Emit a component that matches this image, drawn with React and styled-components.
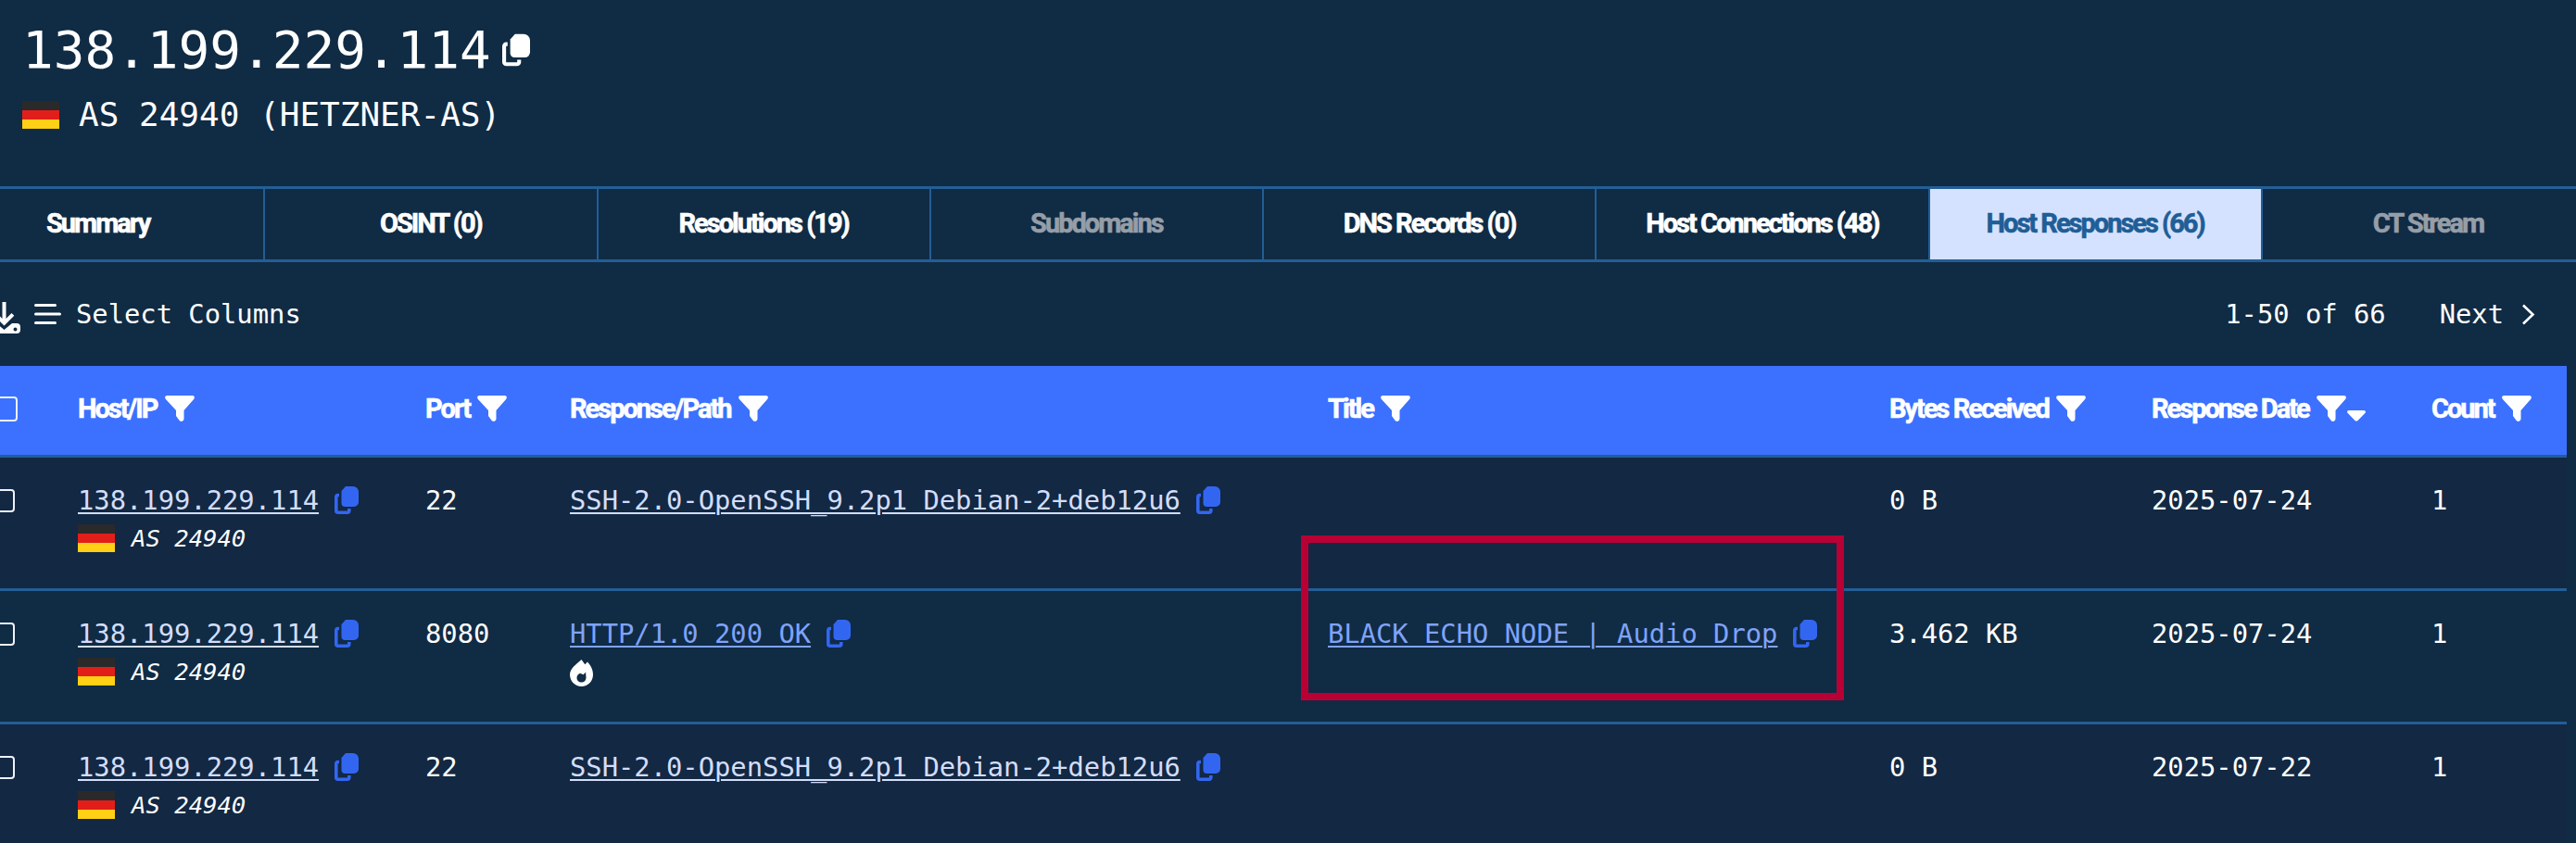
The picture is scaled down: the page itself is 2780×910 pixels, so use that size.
import React from 'react';
import styled, { createGlobalStyle } from 'styled-components';

const COLUMNS = '158px 375px 156px 818px 606px 283px 302px 146px';
const BORDER = '#235e96';
const MONO = '"DejaVu Sans Mono", monospace';
const HEAD = 'Roboto, "Open Sans", sans-serif';

const Global = createGlobalStyle`
    html, body {
        margin: 0;
        padding: 0;
        background: #102b44;
    }
`;

const Page = styled.div`
    position: relative;
    width: 2780px;
    height: 910px;
    overflow: hidden;
    background: #102b44;
    color: #fff;
    font-family: ${MONO};
`;

const Header = styled.header`
    height: 201px;
    padding: 18px 0 0 24px;
    box-sizing: border-box;
`;

const HostTitle = styled.h1`
    display: flex;
    align-items: center;
    margin: 0;
    height: 72px;
    font-size: 56px;
    font-weight: 400;
    line-height: 72px;
    color: #fff;
`;

const AsLine = styled.div`
    display: flex;
    align-items: center;
    gap: 21px;
    margin-top: 11px;
    font-size: 36px;
    line-height: 46px;
`;

const Flag = styled.span`
    display: block;
    flex: none;
    width: 40px;
    height: 30px;
    background: linear-gradient(#2a2a2a 0 33.3%, #e21e1a 33.3% 66.6%, #ffd015 66.6%);
`;

const Tabs = styled.nav`
    display: grid;
    grid-template-columns: repeat(8, 359.25px);
    height: 82px;
    margin-left: -75px;
    box-sizing: border-box;
    border-top: 3px solid ${BORDER};
    border-bottom: 3px solid ${BORDER};
`;

const Tab = styled.div`
    display: flex;
    align-items: center;
    justify-content: center;
    padding-bottom: 3px;
    border-left: 2px solid ${BORDER};
    font-family: ${HEAD};
    font-size: 29px;
    font-weight: 700;
    letter-spacing: -2px;
    -webkit-text-stroke: 0.6px currentColor;
    background: ${p => (p.$active ? '#d5e2ff' : 'transparent')};
    color: ${p => (p.$active ? '#1f5e96' : p.$muted ? '#959ea8' : '#fff')};
`;

const Toolbar = styled.div`
    display: flex;
    align-items: center;
    justify-content: space-between;
    height: 112px;
    margin-left: -14px;
    padding-right: 44px;
    font-size: 28.8px;
`;

const ToolGroup = styled.div`
    display: flex;
    align-items: center;
`;

const DownloadIcon = styled.svg`
    width: 36px;
    height: 34px;
    margin: 8px 15px 0 0;
    fill: #fff;
`;

const MenuIcon = styled.svg`
    width: 29px;
    height: 22px;
    margin-right: 16px;
    fill: #fff;
`;

const Next = styled.span`
    margin-left: 58px;
`;

const ChevronIcon = styled.svg`
    width: 15px;
    height: 23px;
    margin-left: 19px;
    fill: none;
    stroke: #fff;
    stroke-width: 2.6;
`;

const Table = styled.div`
    margin-left: -74px;
    width: 2844px;
`;

const HeadRow = styled.div`
    display: grid;
    grid-template-columns: ${COLUMNS};
    align-items: center;
    height: 99px;
    box-sizing: border-box;
    padding-bottom: 4px;
    background: #3b71fe;
    border-bottom: 3px solid ${BORDER};
    font-family: ${HEAD};
    font-size: 29px;
    font-weight: 700;
    letter-spacing: -2px;
    -webkit-text-stroke: 0.6px currentColor;
`;

const HeadCell = styled.div`
    display: flex;
    align-items: center;
    white-space: nowrap;
`;

const CheckCell = styled.div`
    padding-left: ${p => p.$left}px;
    padding-top: ${p => p.$top || 0}px;
`;

const Check = styled.span`
    display: block;
    box-sizing: border-box;
    width: ${p => p.$size}px;
    height: ${p => p.$size}px;
    border: 2.5px solid #eef2fb;
    border-radius: 4px;
`;

const FunnelIcon = styled.svg`
    flex: none;
    width: 32px;
    height: 28px;
    margin-left: 8px;
    fill: #fff;
    stroke: none;
`;

const SortIcon = styled.svg`
    flex: none;
    width: 20px;
    height: 12px;
    margin: 16px 0 0 1px;
    fill: #fff;
    stroke: none;
`;

const Row = styled.div`
    display: grid;
    grid-template-columns: ${COLUMNS};
    align-items: start;
    height: 144px;
    box-sizing: border-box;
    padding-top: 28px;
    background: ${p => (p.$alt ? '#102b44' : '#122843')};
    border-bottom: 3px solid ${BORDER};
    font-size: 28.8px;
    line-height: 36px;
`;

const Cell = styled.div`
    display: flex;
    flex-direction: column;
    align-items: flex-start;
    gap: 5px;
`;

const LinkLine = styled.div`
    display: flex;
    align-items: center;
    gap: 17px;
    white-space: nowrap;
`;

const LinkText = styled.a`
    color: ${p => (p.$fresh ? '#7fa3f9' : '#d3ddfa')};
    text-decoration: underline;
    text-decoration-thickness: 2px;
    text-underline-offset: 3px;
`;

const CopyIcon = styled.svg`
    flex: none;
    width: ${p => (p.$large ? 30 : 26)}px;
    height: ${p => (p.$large ? 36 : 30)}px;
    margin: 0 0 0 ${p => (p.$large ? 12 : 0)}px;
    fill: ${p => (p.$large ? '#fff' : '#3366f0')};
    stroke: ${p => (p.$large ? '#fff' : '#3366f0')};
`;

const AsRow = styled.div`
    display: flex;
    align-items: center;
    gap: 18px;
    font-size: 25.6px;
    font-style: italic;
`;

const FlameIcon = styled.svg`
    display: block;
    width: 25px;
    height: 29px;
    margin-top: 5px;
    fill: #fff;
`;

const Highlight = styled.div`
    position: absolute;
    left: 1404px;
    top: 578px;
    width: 586px;
    height: 178px;
    box-sizing: border-box;
    border: 8px solid #b80035;
    pointer-events: none;
`;

const Copy = ({ large }) => (
    <CopyIcon $large={large} viewBox="0 0 26 30">
        <path stroke="none" d="M12 0H20a6 6 0 0 1 6 6V17a5 5 0 0 1-5 5H11.500a4 4 0 0 1-4-4V5z" />
        <path fill="none" strokeWidth="3.600" d="M5 9.500H3.800A2 2 0 0 0 1.800 11.500v14.700a2 2 0 0 0 2 2h10a2 2 0 0 0 2-2V24" />
    </CopyIcon>
);

const Funnel = () => (
    <FunnelIcon viewBox="0 0 32 28">
        <path d="M2.500 0h27c2.200 0 3 2 1.800 3.700L20.500 16v9c0 2.800-3.400 3.900-5 1.700L12 22v-6L.7 3.700C-.5 2 .3 0 2.500 0z" />
    </FunnelIcon>
);

const HostLink = () => (
    <Cell>
        <LinkLine>
            <LinkText>138.199.229.114</LinkText>
            <Copy />
        </LinkLine>
        <AsRow><Flag />AS 24940</AsRow>
    </Cell>
);

const tabs = [
    { label: 'Summary' },
    { label: 'OSINT (0)' },
    { label: 'Resolutions (19)' },
    { label: 'Subdomains', muted: true },
    { label: 'DNS Records (0)' },
    { label: 'Host Connections (48)' },
    { label: 'Host Responses (66)', active: true },
    { label: 'CT Stream', muted: true },
];

const rows = [
    { port: '22', response: 'SSH-2.0-OpenSSH_9.2p1 Debian-2+deb12u6', bytes: '0 B', date: '2025-07-24' },
    { port: '8080', response: 'HTTP/1.0 200 OK', title: 'BLACK ECHO NODE | Audio Drop', bytes: '3.462 KB', date: '2025-07-24', fresh: true },
    { port: '22', response: 'SSH-2.0-OpenSSH_9.2p1 Debian-2+deb12u6', bytes: '0 B', date: '2025-07-22' },
];

const heads = ['Host/IP', 'Port', 'Response/Path', 'Title', 'Bytes Received', 'Response Date', 'Count'];

function App() {
    return (
        <Page>
            <Global />
            <Header>
                <HostTitle>138.199.229.114<Copy large /></HostTitle>
                <AsLine><Flag />AS 24940 (HETZNER-AS)</AsLine>
            </Header>

            <Tabs>
                {tabs.map(t => (
                    <Tab key={t.label} $active={t.active} $muted={t.muted}>{t.label}</Tab>
                ))}
            </Tabs>

            <Toolbar>
                <ToolGroup>
                    <DownloadIcon viewBox="0 0 36 34">
                        <path d="M16.500 0h4v18l6-6 2.800 2.800L18.500 25.600 7.700 14.800 10.500 12l6 6z" />
                        <path fillRule="evenodd" d="M4 23h6l8.500 7 8.500-7h5a4 4 0 0 1 4 4v3a4 4 0 0 1-4 4H4a4 4 0 0 1-4-4v-3a4 4 0 0 1 4-4zm26.500 4.500a2 2 0 1 0 0 4 2 2 0 0 0 0-4z" />
                    </DownloadIcon>
                    <MenuIcon viewBox="0 0 29 22">
                        <rect x="0" y="0" width="24" height="3" rx="1.500" />
                        <rect x="0" y="9.500" width="29" height="3" rx="1.500" />
                        <rect x="0" y="19" width="24" height="3" rx="1.500" />
                    </MenuIcon>
                    Select Columns
                </ToolGroup>
                <ToolGroup>
                    1-50 of 66
                    <Next>Next</Next>
                    <ChevronIcon viewBox="0 0 15 23"><path d="M2 1.500 12.500 11.500 2 21.500" /></ChevronIcon>
                </ToolGroup>
            </Toolbar>

            <Table>
                <HeadRow>
                    <CheckCell $left={66}><Check $size={27} /></CheckCell>
                    {heads.map(h => (
                        <HeadCell key={h}>
                            {h}
                            <Funnel />
                            {h === 'Response Date' && (
                                <SortIcon viewBox="0 0 20 12"><path d="M2 0h16c1.800 0 2.500 1.800 1.300 3l-7.800 8c-.8.800-2.200.800-3 0L.7 3C-.5 1.800.2 0 2 0z" /></SortIcon>
                            )}
                        </HeadCell>
                    ))}
                </HeadRow>

                {rows.map((r, i) => (
                    <Row key={i} $alt={i === 1}>
                        <CheckCell $left={65} $top={6}><Check $size={25} /></CheckCell>
                        <HostLink />
                        <Cell>{r.port}</Cell>
                        <Cell>
                            <LinkLine>
                                <LinkText $fresh={r.fresh}>{r.response}</LinkText>
                                <Copy />
                            </LinkLine>
                            {r.fresh && (
                                <FlameIcon viewBox="0 0 25 29">
                                    <path fillRule="evenodd" d="M12.500 0l3.800 5.200L19 2.500c3.500 3.800 6 8.300 6 13.800C25 23.500 19.500 29 12.500 29S0 23.500 0 16.300C0 10 5.500 6 12.500 0zm4.800 13.500-2.800 2.700-3.500-1.500c-2.300 1-3.500 2.800-3.500 5 0 2.800 2.200 4.800 5 4.800s5-2 5-5c0-2.300-.6-4.300-.2-6z" />
                                </FlameIcon>
                            )}
                        </Cell>
                        <Cell>
                            {r.title && (
                                <LinkLine>
                                    <LinkText $fresh>{r.title}</LinkText>
                                    <Copy />
                                </LinkLine>
                            )}
                        </Cell>
                        <Cell>{r.bytes}</Cell>
                        <Cell>{r.date}</Cell>
                        <Cell>1</Cell>
                    </Row>
                ))}
            </Table>

            <Highlight />
        </Page>
    );
}

export default App;
